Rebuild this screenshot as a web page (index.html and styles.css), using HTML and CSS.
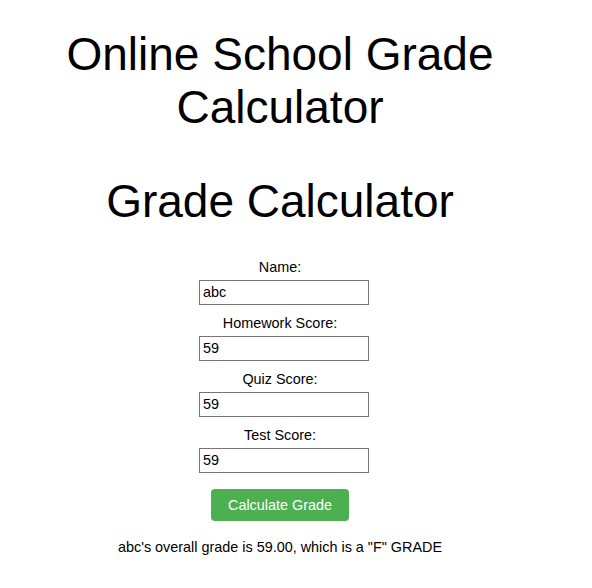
FILE: index.html
```html
<!DOCTYPE html>
<html lang="en">
<head>
<meta charset="utf-8">
<title>Online School Grade Calculator</title>
<link rel="stylesheet" href="styles.css">
</head>
<body>
<div class="page">
  <h1 class="title">Online School Grade Calculator</h1>
  <h2 class="subtitle">Grade Calculator</h2>
  <form class="form">
    <div class="field">
      <label class="label" for="name">Name:</label>
      <input class="input" id="name" type="text" value="abc">
    </div>
    <div class="field">
      <label class="label" for="hw">Homework Score:</label>
      <input class="input" id="hw" type="text" value="59">
    </div>
    <div class="field">
      <label class="label" for="quiz">Quiz Score:</label>
      <input class="input" id="quiz" type="text" value="59">
    </div>
    <div class="field">
      <label class="label" for="test">Test Score:</label>
      <input class="input" id="test" type="text" value="59">
    </div>
    <button class="button" type="button">Calculate Grade</button>
  </form>
  <p class="result">abc's overall grade is 59.00, which is a "F" GRADE</p>
</div>
</body>
</html>
```

FILE: styles.css
```css
html, body {
  margin: 0;
  padding: 0;
  background: #ffffff;
}

body {
  font-family: "Liberation Sans", Arial, sans-serif;
  color: #000000;
}

.page {
  width: 544px;
  margin-left: 8px;
  text-align: center;
}

.title,
.subtitle {
  font-size: 46px;
  font-weight: normal;
  line-height: 53px;
  margin: 0;
}

.title {
  padding-top: 28px;
}

.subtitle {
  margin-top: 41px;
}

.form {
  width: 162px;
  margin: 31px auto 0;
  display: flex;
  flex-direction: column;
}

.field {
  display: flex;
  flex-direction: column;
  margin-bottom: 10px;
}

.label {
  font-size: 14.4px;
  line-height: 17px;
  margin-bottom: 4px;
  color: #000000;
}

.input {
  display: block;
  width: 100%;
  box-sizing: content-box;
  padding: 3px;
  border: 1px solid #767676;
  border-radius: 0;
  font-family: "Liberation Sans", Arial, sans-serif;
  font-size: 14.4px;
  line-height: 17px;
  height: 17px;
  color: #000000;
  background: #ffffff;
  margin: 0;
  outline: none;
}

.button {
  align-self: center;
  margin-top: 6px;
  background: #4caf50;
  color: #ffffff;
  border: none;
  border-radius: 4px;
  padding: 8px 17px;
  font-family: "Liberation Sans", Arial, sans-serif;
  font-size: 14.4px;
  line-height: 16px;
  white-space: nowrap;
  cursor: pointer;
}

.result {
  font-size: 14.4px;
  line-height: 17px;
  margin: 18px 0 0;
}
```
